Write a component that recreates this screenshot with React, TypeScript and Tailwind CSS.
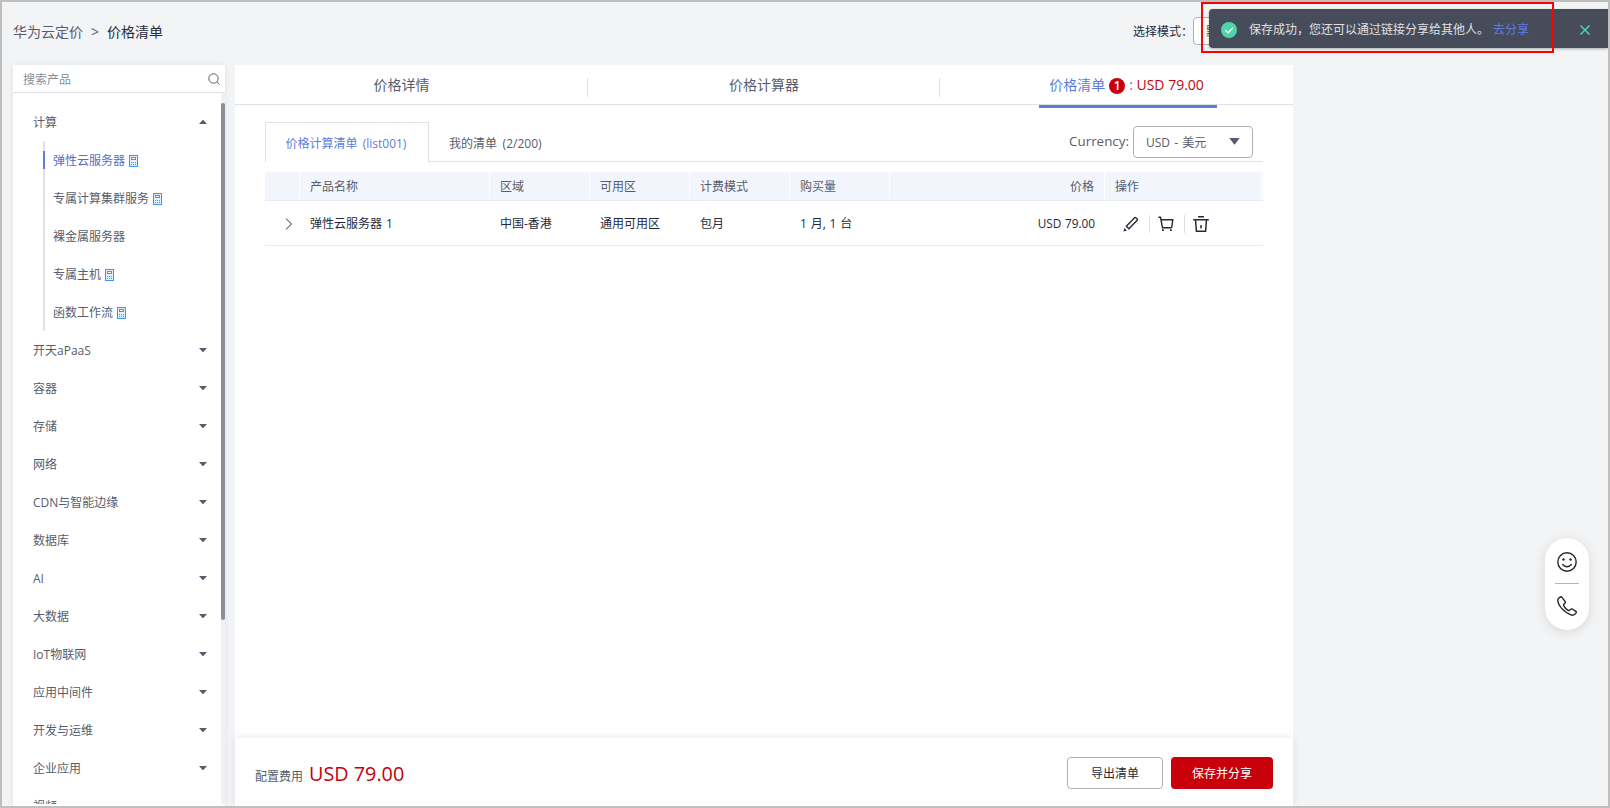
import { ReactNode } from "react";
import clsx from "clsx";

interface Product {
  name: string;
  calc: boolean;
  active?: boolean;
}

const products: Product[] = [
  { name: "弹性云服务器", calc: true, active: true },
  { name: "专属计算集群服务", calc: true },
  { name: "裸金属服务器", calc: false },
  { name: "专属主机", calc: true },
  { name: "函数工作流", calc: true },
];

const categories = [
  "开天aPaaS",
  "容器",
  "存储",
  "网络",
  "CDN与智能边缘",
  "数据库",
  "AI",
  "大数据",
  "IoT物联网",
  "应用中间件",
  "开发与运维",
  "企业应用",
  "视频",
];

function CalcIcon() {
  return (
    <svg width="9" height="12" viewBox="0 0 9 12" fill="none" shapeRendering="crispEdges">
      <rect x="0.5" y="0.5" width="8" height="11" fill="#e3f1ff" stroke="#3397ff" />
      <rect x="2.5" y="2.5" width="4" height="2" fill="#fff" stroke="#3397ff" />
      <path d="M2 7h1v1H2zM4 7h1v1H4zM6 7h1v1H6zM2 9h1v1H2zM4 9h1v1H4zM6 9h1v1H6z" fill="#3397ff" />
    </svg>
  );
}

function Caret({ up }: { up?: boolean }) {
  return (
    <svg width="8" height="4" viewBox="0 0 8 4" className={clsx(up && "rotate-180")}>
      <path d="M0 0h8L4.6 3.7a.8.8 0 0 1-1.2 0z" fill="#575d6c" />
    </svg>
  );
}

function Sidebar() {
  return (
    <aside className="flex w-[212px] shrink-0 flex-col bg-white shadow-[0_0_6px_rgba(0,0,0,0.08)]">
      <div className="flex h-7 shrink-0 items-center justify-between border-b border-[#dfe1e6] pl-[10px] pr-[5px]">
        <span className="pt-[2px] text-[#8a8e99]">搜索产品</span>
        <svg width="12" height="12" viewBox="0 0 12 12" fill="none" stroke="#575d6c">
          <circle cx="5.5" cy="5.5" r="4.7" />
          <path d="M9 9l2.4 2.4" />
        </svg>
      </div>
      <div className="flex min-h-0 flex-1">
        <div className="mb-[2px] flex-1 overflow-hidden pt-[10px]">
          <div className="flex h-[38px] items-center justify-between pl-5 pr-[14px]">
            <span className="pt-[2px]">计算</span>
            <Caret up />
          </div>
          <ul className="ml-[30px] h-[190px] border-l-2 border-[#dfe1e6]">
            {products.map((p) => (
              <li key={p.name} className="relative flex h-[38px] items-center gap-1 pl-2 pt-[2px]">
                {p.active && <i className="absolute -left-[2px] top-[10px] h-[18px] w-[2px] bg-[#5e7ce0]" />}
                <span className={clsx(p.active && "text-[#526ecc]")}>{p.name}</span>
                {p.calc && <CalcIcon />}
              </li>
            ))}
          </ul>
          {categories.map((c) => (
            <div key={c} className="flex h-[38px] items-center justify-between pl-5 pr-[14px]">
              <span className="pt-[2px]">{c}</span>
              <Caret />
            </div>
          ))}
        </div>
        <div className="mb-[2px] w-1 bg-[#f0f1f5] pt-[10px]">
          <div className="h-[517px] rounded-sm bg-[#8a8e99]" />
        </div>
      </div>
    </aside>
  );
}

function Th({ children, className }: { children?: ReactNode; className?: string }) {
  return <div className={clsx("flex items-center border-r border-white px-[10px] pt-[2px]", className)}>{children}</div>;
}

const cols =
  "grid grid-cols-[35px_190px_100px_100px_100px_100px_215px_157px]";

function PriceTable() {
  return (
    <div className="mt-[10px]">
      <div className={clsx(cols, "h-[29px] border-b border-[#e9ebf3] bg-[#f2f5fc]")}>
        <Th />
        <Th>产品名称</Th>
        <Th>区域</Th>
        <Th>可用区</Th>
        <Th>计费模式</Th>
        <Th>购买量</Th>
        <Th className="justify-end">价格</Th>
        <Th>操作</Th>
      </div>
      <div className={clsx(cols, "h-[45px] items-center border-b border-[#e9ebf3] pt-[2px] text-[#252b3a]")}>
        <div className="pl-5">
          <svg width="8" height="12" viewBox="0 0 8 12" fill="none" stroke="#71757f" strokeWidth="1.1">
            <path d="M1 .7L6.5 6 1 11.3" />
          </svg>
        </div>
        <div className="px-[10px] [word-spacing:1px]">弹性云服务器 1</div>
        <div className="px-[10px]">中国-香港</div>
        <div className="px-[10px]">通用可用区</div>
        <div className="px-[10px]">包月</div>
        <div className="px-[10px] [word-spacing:0.7px]">1 月, 1 台</div>
        <div className="pr-[10px] text-right text-[11.8px] [word-spacing:0.5px]">USD 79.00</div>
        <div className="flex items-center pl-[18px]">
          <svg width="16" height="16" viewBox="0 0 16 16" fill="none" stroke="#252b3a" strokeWidth="1.4">
            <path d="M3.300 10.200L11.600 1.700q.6-.5 1.200 0l1.400 1.300q.5.600 0 1.200L5.900 12.800z" />
            <path d="M1.200 11.900l2.700 2.500-3.300 1.200z" fill="#252b3a" stroke="none" />
          </svg>
          <i className="ml-[10px] mr-[8px] h-[18px] w-px bg-[#dfe1e6]" />
          <svg width="16" height="16" viewBox="0 0 16 16" fill="none" stroke="#252b3a" strokeWidth="1.4">
            <path d="M.3 1.300h2.200l2 10.400h9.200M3.200 3.700h11.600l-1.100 8" />
            <path d="M4 13.300h1.800v1.800H4zM12 13.300h1.800v1.800H12z" fill="#252b3a" stroke="none" />
          </svg>
          <i className="ml-[10px] mr-[8px] h-[18px] w-px bg-[#dfe1e6]" />
          <svg width="16" height="16" viewBox="0 0 16 16" fill="none" stroke="#252b3a" strokeWidth="1.500">
            <path d="M5 .8h6M.2 3.700h15.600M2.500 3.700l.9 11.500h9.200l.9-11.500M8 9v3.500" />
          </svg>
        </div>
      </div>
    </div>
  );
}

function MainPanel() {
  return (
    <main className="flex w-[1058px] shrink-0 flex-col bg-white">
      <nav className="flex h-10 shrink-0 border-b border-[#dfe1e6] text-sm">
        <div className="relative flex w-[353px] items-center justify-center pr-5">
          价格详情
          <i className="absolute right-0 top-[13px] h-[19px] w-px bg-[#dfe1e6]" />
        </div>
        <div className="relative flex w-[352px] items-center justify-center">
          价格计算器
          <i className="absolute right-0 top-[13px] h-[19px] w-px bg-[#dfe1e6]" />
        </div>
        <div className="relative flex flex-1 items-center justify-center pl-5">
          <span className="text-[#5e7ce0]">价格清单</span>
          <b className="mx-1 mt-[2px] flex h-4 w-4 items-center justify-center rounded-full bg-[#c7000b] text-xs font-semibold text-white">
            1
          </b>
          <span className="text-[#c7000b]">
            <span className="text-[#71757f]">: </span>USD 79.00
          </span>
          <i className="absolute -bottom-[4px] left-[99px] h-[3px] w-[178px] bg-[#5e7ce0]" />
        </div>
      </nav>

      <section className="flex-1 px-[30px] pt-[17px]">
        <div className="flex h-10 w-[998px]">
          <div className="flex w-[164px] items-center justify-center border-x border-t border-[#dfe1e6] pr-[2px] pt-[3px] text-[#5e7ce0] [word-spacing:2px]">
            价格计算清单 (list001)
          </div>
          <div className="flex flex-1 items-center justify-between border-b border-[#dfe1e6] pl-5 pr-[10px]">
            <span className="pt-1 [word-spacing:2.5px]">我的清单 (2/200)</span>
            <div className="flex items-center gap-1">
              <span className="pt-px text-[13.4px]">Currency:</span>
              <div className="flex h-8 w-[120px] items-center justify-between rounded-sm border border-[#adb0b8] pl-3 pr-[12px]">
                <span className="pt-[2px] [word-spacing:1px]">USD - 美元</span>
                <svg width="11" height="7" viewBox="0 0 11 7">
                  <path d="M.3 0h10.400L6 6.300q-.5.600-1 0z" fill="#575d6c" />
                </svg>
              </div>
            </div>
          </div>
        </div>
        <PriceTable />
      </section>

      <footer className="flex h-[68px] shrink-0 items-center justify-between pl-5 pr-5 pt-[2px] shadow-[0_0_8px_rgba(0,0,0,0.1)]">
        <div className="flex items-baseline gap-[6px] pt-[2px]">
          <span>配置费用</span>
          <span className="text-[19.8px] leading-7 text-[#c7000b]">USD 79.00</span>
        </div>
        <div className="flex gap-2 text-[#252b3a]">
          <button className="h-8 w-24 rounded-sm border border-[#adb0b8] bg-white pt-[2px]">导出清单</button>
          <button className="h-8 w-[102px] rounded-sm bg-[#c7000b] pt-[2px] text-white">保存并分享</button>
        </div>
      </footer>
    </main>
  );
}

function Toast() {
  return (
    <div className="absolute right-0 top-[7px] flex h-[39px] w-[399px] items-center rounded-l-sm bg-[#464c59] pl-3 pr-[18px] pt-[2px] shadow-[0_1px_3px_rgba(0,0,0,0.3)]">
      <svg width="16" height="16" viewBox="0 0 16 16">
        <circle cx="8" cy="8" r="8" fill="#50d4ab" />
        <path d="M4.300 8l2.800 2.800L12 5.700" fill="none" stroke="#fff" strokeWidth="1.200" />
      </svg>
      <span className="ml-3 pt-px text-[#dfe1e6]">保存成功，您还可以通过链接分享给其他人。</span>
      <a className="ml-1 pt-px text-[#5e7ce0]">去分享</a>
      <svg width="10" height="10" viewBox="0 0 10 10" stroke="#50d4ab" strokeWidth="1.500" className="ml-auto">
        <path d="M.5.5l9 9M9.500.5l-9 9" />
      </svg>
    </div>
  );
}

function FloatBar() {
  return (
    <div className="absolute right-[19px] top-[536px] flex h-[92px] w-11 flex-col items-center rounded-full bg-white pt-[14px] shadow-[0_2px_12px_rgba(0,0,0,0.12)]">
      <svg width="20" height="20" viewBox="0 0 20 20" fill="none" stroke="#252525" strokeWidth="1.400">
        <circle cx="10" cy="10" r="9.200" />
        <path d="M5.300 12.300q4.700 5 9.400 0" />
        <circle cx="6.500" cy="7.500" r="1.200" fill="#252525" stroke="none" />
        <circle cx="13.500" cy="7.500" r="1.200" fill="#252525" stroke="none" />
      </svg>
      <i className="mt-[11px] h-px w-6 bg-[#b5b5b5]" />
      <svg width="20" height="20" viewBox="0 0 20 20" fill="none" stroke="#252525" strokeWidth="1.400" strokeLinejoin="round" className="mt-3">
        <path d="M3.800.8Q2.300 1.200.9 3.400.2 6.800 4.500 12.100q4.600 5.200 10.200 7.100 2.700.4 4.600-2.600.2-.8-.5-1.300l-3.500-2.300q-.8-.4-1.500.2l-1.300 1.100q-.7.500-1.500 0-3-2-4.300-4.700-.3-.7.200-1.300l1.200-1.300q.5-.6.100-1.400L5 1.300q-.4-.7-1.200-.5z" />
      </svg>
    </div>
  );
}

export default function App() {
  return (
    <div className="relative flex h-[808px] w-[1610px] flex-col overflow-hidden border-2 border-[#bfbfbf] bg-[#f3f4f6] font-['Open_Sans','Noto_Sans_CJK_SC',sans-serif] text-xs text-[#575d6c]">
      <header className="flex h-[63px] shrink-0 items-start justify-between pl-[11px] text-sm">
        <div className="flex gap-2 pt-5">
          <span>华为云定价</span>
          <span>&gt;</span>
          <span className="text-[#252b3a]">价格清单</span>
        </div>
        <div className="mt-[15px] flex w-[475px] items-center text-xs">
          <span className="w-[60px] pt-[2px] text-[#252b3a]">选择模式：</span>
          <div className="flex h-7 w-[140px] items-center rounded-sm border border-[#adb0b8] bg-white pl-3 pt-[2px]">
            <span>默认</span>
          </div>
        </div>
      </header>

      <div className="flex min-h-0 flex-1 gap-[10px] pl-[11px]">
        <Sidebar />
        <MainPanel />
      </div>

      <Toast />
      <div className="absolute left-[1199px] top-0 h-[51px] w-[353px] border-2 border-[#f00]" />
      <FloatBar />
    </div>
  );
}
